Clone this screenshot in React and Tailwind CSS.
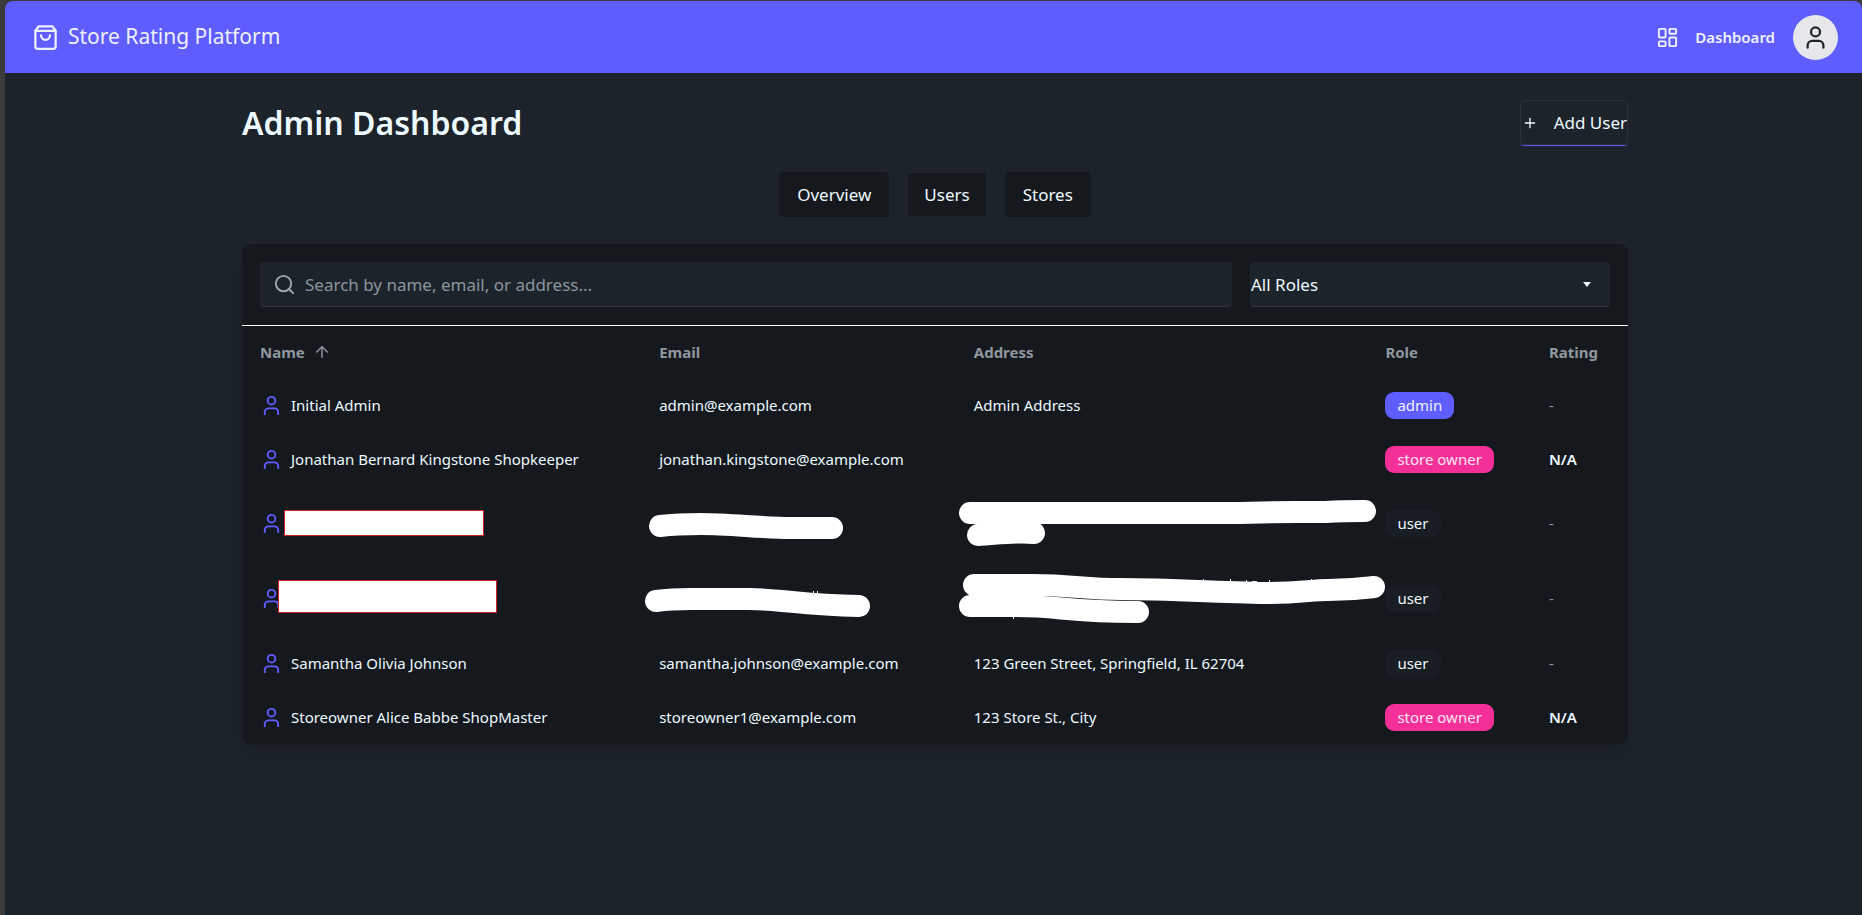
import React from 'react';
import { ArrowUp, Plus, Search } from 'lucide-react';

const BagIcon = () => (
  <svg viewBox="0 0 24 24" className="h-[27px] w-[27px]" fill="none" stroke="currentColor" strokeWidth="2" strokeLinecap="round" strokeLinejoin="round" aria-hidden="true">
    <path d="M6 2 3 6v14a2 2 0 0 0 2 2h14a2 2 0 0 0 2-2V6l-3-4Z" />
    <path d="M3 6h18" />
    <path d="M16 10a4 4 0 0 1-8 0" />
  </svg>
);

const DashboardIcon = () => (
  <svg viewBox="0 0 24 24" className="h-[23px] w-[23px]" fill="none" stroke="currentColor" strokeWidth="2" strokeLinecap="round" strokeLinejoin="round" aria-hidden="true">
    <rect width="7" height="9" x="3" y="3" rx="1" />
    <rect width="7" height="5" x="14" y="3" rx="1" />
    <rect width="7" height="9" x="14" y="12" rx="1" />
    <rect width="7" height="5" x="3" y="16" rx="1" />
  </svg>
);

const PersonIcon = ({ className }) => (
  <svg viewBox="0 0 24 24" className={className} fill="none" stroke="currentColor" strokeWidth="2" strokeLinecap="round" strokeLinejoin="round" aria-hidden="true">
    <circle cx="12" cy="7" r="4" />
    <path d="M19 21v-2a4 4 0 0 0-4-4H9a4 4 0 0 0-4 4v2" />
  </svg>
);

const Scribble = ({ paths, marks }) => (
  <svg className="pointer-events-none absolute top-0 left-0 h-px w-px overflow-visible" fill="none" aria-hidden="true">
    {marks && <path d={marks} stroke="#ecf9ff" strokeWidth="1" />}
    {paths.map((d) => (
      <path key={d} d={d} stroke="#ffffff" strokeWidth="22" strokeLinecap="round" strokeLinejoin="round" />
    ))}
  </svg>
);

const users = [
  { id: 1, name: 'Initial Admin', email: 'admin@example.com', address: 'Admin Address', role: 'admin' },
  { id: 2, name: 'Jonathan Bernard Kingstone Shopkeeper', email: 'jonathan.kingstone@example.com', address: '', role: 'store owner' },
  {
    id: 3,
    hidden: true,
    box: 'top-6 left-[42px] h-[26px] w-[200px]',
    emailPaths: ['M19 40 Q36 38 60 38 C90 38 120 42 150 42 H191'],
    addressPaths: ['M14 27 H265 C300 27 310 26 340 26 H370 Q385 25 409 25', 'M22 49 C40 48 62 45 78 47'],
    role: 'user',
  },
  {
    id: 4,
    hidden: true,
    box: 'top-[19px] left-9 h-[33px] w-[219px]',
    emailPaths: ['M15 40 Q30 38 50 38 H108 C140 38 160 44 218 45'],
    emailMarks: 'M172.500 30v6M176.500 30v6',
    addressPaths: [
      'M18 24 H75 C120 24 125 28 165 28 C210 28 280 32 313 32 C345 32 355 29 372 29 C395 29 402 28 418 26',
      'M14 45 H60 C105 45 110 51 182 51',
    ],
    addressMarks: 'M57.500 52v6M247.500 18v6M274.500 18v6M290.500 19v5M296 20.500h5M313.500 19v5M355.500 18v5',
    role: 'user',
  },
  { id: 5, name: 'Samantha Olivia Johnson', email: 'samantha.johnson@example.com', address: '123 Green Street, Springfield, IL 62704', role: 'user' },
  { id: 6, name: 'Storeowner Alice Babbe ShopMaster', email: 'storeowner1@example.com', address: '123 Store St., City', role: 'store owner' },
];

const roleStyles = {
  admin: 'bg-[#605dff] text-[#edf1fe]',
  'store owner': 'bg-[#f43098] text-[#f9e4f0]',
  user: 'bg-[#191e24] text-[#ecf9ff]',
};

const Header = () => (
  <header className="flex h-[72px] items-center justify-between rounded-t-lg bg-[#605dff] pr-6 pl-[27px] text-[#edf1fe]">
    <a href="#home" className="flex items-center gap-[9px] text-[21px]">
      <BagIcon />
      Store Rating Platform
    </a>
    <nav className="flex items-center gap-[18px]">
      <a href="#dashboard" className="flex items-center gap-4 text-[15px] font-semibold">
        <DashboardIcon />
        Dashboard
      </a>
      <button type="button" aria-label="Account" className="flex h-[45px] w-[45px] items-center justify-center rounded-full bg-[#e5e7eb] text-[#1d232a]">
        <PersonIcon className="h-[27px] w-[27px]" />
      </button>
    </nav>
  </header>
);

const UserRow = ({ user }) => (
  <tr className={user.hidden ? 'h-[75px]' : 'h-[54px]'}>
    <td className="relative px-[18px]">
      <div className="flex items-center gap-2">
        <PersonIcon className="h-[23px] w-[23px] shrink-0 text-[#605dff]" />
        {user.name}
      </div>
      {user.hidden && <span className={`absolute border border-[#d32027] bg-white ${user.box}`} />}
    </td>
    <td className="relative px-[18px]">
      {user.email}
      {user.hidden && <Scribble paths={user.emailPaths} marks={user.emailMarks} />}
    </td>
    <td className="relative px-[18px]">
      {user.address}
      {user.hidden && <Scribble paths={user.addressPaths} marks={user.addressMarks} />}
    </td>
    <td className="px-[18px]">
      <span className={`inline-flex h-[27px] items-center rounded-[9px] px-3 align-middle ${roleStyles[user.role]}`}>{user.role}</span>
    </td>
    <td className="px-[18px]">
      {user.role === 'store owner' ? <span className="font-semibold">N/A</span> : <span className="text-[#8b949c]">-</span>}
    </td>
  </tr>
);

export default function App() {
  return (
    <div className="min-h-screen bg-[#3b3b3b] pt-px pl-[5px] font-['Noto_Sans','Open_Sans',sans-serif] text-[#ecf9ff]">
      <div className="min-h-[calc(100vh-1px)] rounded-t-lg bg-[#1d232a]">
        <Header />
        <main className="mx-auto max-w-[1389px] pt-[27px] pb-10 pl-[3px]">
          <div className="flex items-center justify-between">
            <h1 className="text-[32px] leading-[45px] font-semibold">Admin Dashboard</h1>
            <button type="button" className="flex h-[45px] items-center gap-4 rounded border border-[#2a3037] pl-px text-[17px] whitespace-nowrap shadow-[0_2px_1px_-1px_#605dff]">
              <Plus size={16} />
              Add User
            </button>
          </div>

          <div className="mt-[27px] flex justify-center gap-[18px] text-[17px]">
            <button type="button" className="h-[45px] rounded bg-[#15191e] px-[18px]">Overview</button>
            <button type="button" className="h-[45px] rounded border border-[#1f252b] bg-[#15191e] px-4">Users</button>
            <button type="button" className="h-[45px] rounded bg-[#15191e] px-[18px]">Stores</button>
          </div>

          <section className="mt-[27px] rounded-[9px] bg-[#15191e] shadow-lg">
            <div className="flex gap-[18px] border-b border-white p-[18px] text-[17px]">
              <label className="flex h-[45px] flex-1 items-center gap-[9px] rounded border border-[#20262d] border-b-[#2e353d] bg-[#1d232a] px-3 text-[#a0a8af]">
                <Search size={23} />
                <input aria-label="Search users" placeholder="Search by name, email, or address..." className="min-w-0 flex-1 bg-transparent outline-none placeholder:text-[#8b959e]" />
              </label>
              <div className="relative w-[360px]">
                <select aria-label="Filter by role" className="h-[45px] w-full appearance-none rounded border border-[#20262d] border-b-[#2e353d] bg-[#1d232a] outline-none">
                  <option>All Roles</option>
                  <option>admin</option>
                  <option>store owner</option>
                  <option>user</option>
                </select>
                <svg viewBox="0 0 8 5" className="pointer-events-none absolute top-5 right-[19px] h-[5px] w-2 fill-[#ecf9ff]" aria-hidden="true">
                  <path d="M0 0h8L4 5Z" />
                </svg>
              </div>
            </div>

            <table className="w-full table-fixed text-left text-[15px]">
              <colgroup>
                <col className="w-[28.8%]" />
                <col className="w-[22.7%]" />
                <col className="w-[29.7%]" />
                <col className="w-[11.8%]" />
                <col />
              </colgroup>
              <thead>
                <tr className="h-[52px] text-[#8f989f]">
                  <th className="px-[18px] font-bold">
                    <button type="button" className="flex items-center gap-2">
                      Name
                      <ArrowUp size={18} strokeWidth={2} />
                    </button>
                  </th>
                  <th className="px-[18px] font-bold">Email</th>
                  <th className="px-[18px] font-bold">Address</th>
                  <th className="px-[18px] font-bold">Role</th>
                  <th className="px-[18px] font-bold">Rating</th>
                </tr>
              </thead>
              <tbody>
                {users.map((user) => (
                  <UserRow key={user.id} user={user} />
                ))}
              </tbody>
            </table>
          </section>
        </main>
      </div>
    </div>
  );
}
